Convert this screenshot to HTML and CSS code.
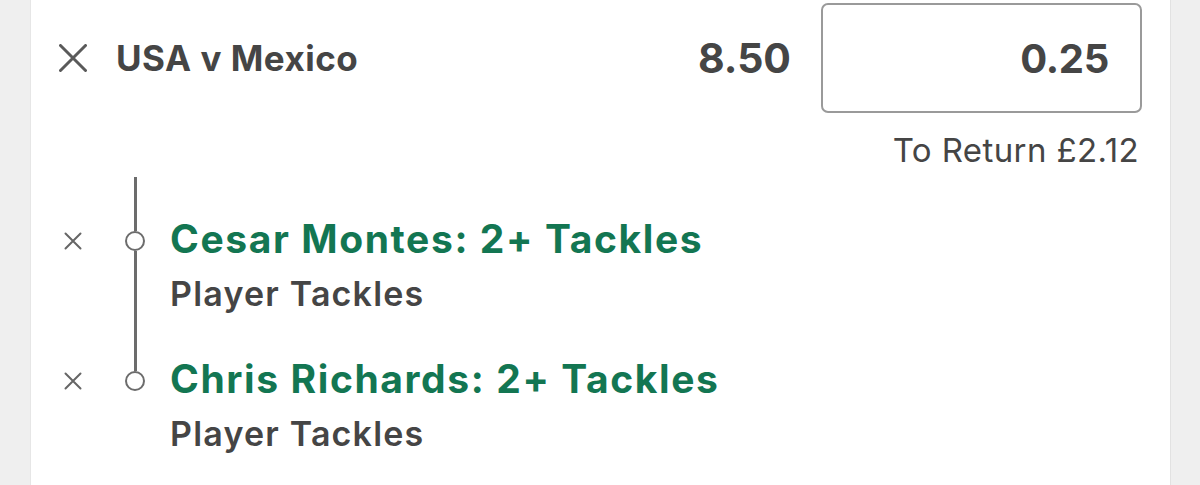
FILE: index.html
```html
<!DOCTYPE html>
<html lang="en">
<head>
<meta charset="utf-8">
<title>Bet slip</title>
<link rel="stylesheet" href="styles.css">
</head>
<body>
<div class="slip">
  <div class="bet-head">
    <button class="remove remove-lg" aria-label="Remove bet">
      <svg viewBox="0 0 28 28" width="28" height="28"><path d="M1.5 1.5 L26.5 26.5 M26.5 1.5 L1.5 26.5" stroke="#5a5a5a" stroke-width="3" fill="none" stroke-linecap="round"/></svg>
    </button>
    <div class="event">USA v Mexico</div>
    <div class="odds">8.50</div>
    <div class="stake">0.25</div>
  </div>
  <div class="returns">To Return £2.12</div>
  <div class="legs">
    <div class="leg leg-first">
      <button class="remove remove-sm" aria-label="Remove selection">
        <svg viewBox="0 0 18 18" width="18" height="18"><path d="M1.5 1.5 L16.5 16.5 M16.5 1.5 L1.5 16.5" stroke="#666" stroke-width="2" fill="none" stroke-linecap="round"/></svg>
      </button>
      <div class="rail"><span class="seg seg-top"></span><span class="node"></span><span class="seg seg-bottom"></span></div>
      <div class="leg-info">
        <div class="leg-title">Cesar Montes: 2+ Tackles</div>
        <div class="leg-market">Player Tackles</div>
      </div>
    </div>
    <div class="leg leg-last">
      <button class="remove remove-sm" aria-label="Remove selection">
        <svg viewBox="0 0 18 18" width="18" height="18"><path d="M1.5 1.5 L16.5 16.5 M16.5 1.5 L1.5 16.5" stroke="#666" stroke-width="2" fill="none" stroke-linecap="round"/></svg>
      </button>
      <div class="rail"><span class="seg seg-top"></span><span class="node"></span><span class="seg seg-bottom"></span></div>
      <div class="leg-info">
        <div class="leg-title">Chris Richards: 2+ Tackles</div>
        <div class="leg-market">Player Tackles</div>
      </div>
    </div>
  </div>
</div>
</body>
</html>
```

FILE: styles.css
```css
* { box-sizing: border-box; }
html, body { margin: 0; padding: 0; }
body {
  background: #efefef;
  font-family: Inter, "Liberation Sans", Arial, sans-serif;
  color: #454545;
  height: 485px;
  overflow: hidden;
}
.slip {
  margin-left: 30px;
  width: 1141px;
  height: 485px;
  background: #fff;
  border-left: 1px solid #e6e6e6;
  border-right: 1px solid #e2e2e2;
  padding: 3px 28px 0 28px;
}
.remove {
  border: 0;
  background: none;
  padding: 0;
  margin: 0;
  display: flex;
  align-items: center;
  justify-content: center;
}
.remove svg { display: block; }
.bet-head {
  display: flex;
  align-items: center;
  height: 110px;
}
.remove-lg { width: 28px; height: 28px; }
.event {
  margin-left: 29px;
  font-size: 35px;
  font-weight: 700;
  flex: 1;
  letter-spacing: 0.5px;
}
.odds {
  font-size: 41px;
  font-weight: 700;
  margin-right: 30px;
}
.stake {
  width: 321px;
  height: 110px;
  border: 2px solid #9a9a9a;
  border-radius: 7px;
  display: flex;
  align-items: center;
  justify-content: flex-end;
  padding-right: 31px;
  font-size: 40px;
  font-weight: 700;
  letter-spacing: -0.3px;
}
.returns {
  text-align: right;
  padding-right: 3px;
  font-size: 33px;
  font-weight: 400;
  margin-top: 17px;
  line-height: 40px;
  letter-spacing: 0.4px;
}
.legs {
  margin-top: 7px;
}
.leg {
  display: flex;
  height: 140px;
  padding-left: 5px;
}
.remove-sm {
  width: 18px;
  height: 18px;
  margin-top: 55px;
}
.rail {
  width: 20px;
  margin-left: 43px;
  display: flex;
  flex-direction: column;
  align-items: center;
}
.seg {
  width: 3px;
  background: #6c6c6c;
}
.seg-top { height: 54px; }
.seg-bottom { flex: 1; }
.leg-last .seg-bottom { background: transparent; }
.node {
  width: 20px;
  height: 20px;
  border: 2.5px solid #6c6c6c;
  border-radius: 50%;
  background: #fff;
  flex: none;
}
.leg-info {
  margin-left: 25px;
  padding-top: 39px;
}
.leg-title {
  color: #137652;
  font-size: 39px;
  font-weight: 700;
  line-height: 46px;
  letter-spacing: 1.6px;
}
.leg-market {
  font-size: 34px;
  font-weight: 600;
  line-height: 40px;
  margin-top: 12px;
  letter-spacing: 1.2px;
}
```
